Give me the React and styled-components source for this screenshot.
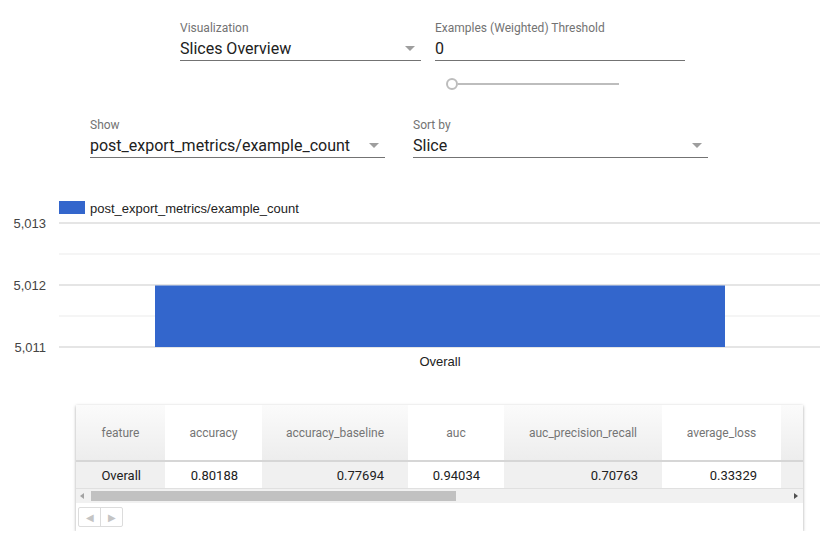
import React from "react";
import styled, { createGlobalStyle } from "styled-components";

const Global = createGlobalStyle`
  html, body { margin: 0; padding: 0; background: #fff; }
  body { font-family: Roboto, "Noto Sans", Arial, sans-serif; color: #212121; }
`;

const Page = styled.div`
  width: 831px;
  display: flex;
  flex-direction: column;
`;

const ControlRow = styled.div`
  display: flex;
  gap: ${(p) => p.$gap}px;
  padding-left: ${(p) => p.$left}px;
  padding-top: ${(p) => p.$top}px;
`;

const Field = styled.div`
  width: ${(p) => p.$width}px;
  display: flex;
  flex-direction: column;
`;

const Label = styled.div`
  font-size: 12px;
  line-height: 16px;
  color: #737373;
`;

const ValueLine = styled.div`
  display: flex;
  align-items: center;
  justify-content: space-between;
  height: 25px;
  padding-top: 1px;
  box-sizing: border-box;
  font-size: 16px;
  color: #212121;
  border-bottom: 1px solid #737373;
`;

const Caret = styled.span`
  width: 0;
  height: 0;
  border-left: 5px solid transparent;
  border-right: 5px solid transparent;
  border-top: 5px solid #9e9e9e;
  margin-right: 6px;
`;

const SliderWrap = styled.div`
  margin-top: 11px;
  margin-left: 11px;
  width: 173px;
  height: 24px;
  display: flex;
  align-items: center;
`;

const Knob = styled.span`
  width: 8px;
  height: 8px;
  border: 2px solid #bdbdbd;
  border-radius: 50%;
  box-sizing: content-box;
`;

const Track = styled.span`
  flex: 1;
  height: 2px;
  background: #bdbdbd;
`;

const ChartBox = styled.div`
  margin-top: 32px;
  height: 185px;
  svg { display: block; }
`;

const Card = styled.div`
  margin: 30px 0 0 76px;
  width: 727px;
  background: #fff;
  box-shadow: 0 1px 3px rgba(0, 0, 0, 0.35);
  font-size: 12px;
  overflow: hidden;
`;

const Table = styled.div`
  display: grid;
  grid-template-columns: 89px 97px 146px 96px 158px 119px 22px;
`;

const HeadCell = styled.div`
  height: 55px;
  display: flex;
  align-items: center;
  justify-content: center;
  color: #757575;
  font-size: 12px;
  border-bottom: 2px solid #d6d6d6;
  background: ${(p) =>
    p.$shade ? "linear-gradient(#fbfbfb, #ededed)" : "#fff"};
  white-space: nowrap;
`;

const BodyCell = styled.div`
  height: 27px;
  display: flex;
  align-items: center;
  justify-content: flex-end;
  padding-right: 24px;
  box-sizing: border-box;
  color: #212121;
  font-size: 13px;
  border-bottom: 1px solid #e0e0e0;
  background: ${(p) => (p.$shade ? "#f0f0f0" : "#fff")};
`;

const ScrollBar = styled.div`
  height: 14px;
  background: #f1f1f1;
  display: flex;
  align-items: center;
  position: relative;
`;

const ScrollThumb = styled.div`
  position: absolute;
  left: 15px;
  top: 2px;
  width: 365px;
  height: 10px;
  background: #c1c1c1;
`;

const Arrow = styled.span`
  position: absolute;
  top: 4px;
  ${(p) => (p.$dir === "left" ? "left: 4px;" : "right: 5px;")}
  width: 0;
  height: 0;
  border-top: 3px solid transparent;
  border-bottom: 3px solid transparent;
  ${(p) =>
    p.$dir === "left"
      ? "border-right: 4px solid #a3a3a3;"
      : "border-left: 4px solid #505050;"}
`;

const Footer = styled.div`
  height: 28px;
  display: flex;
  align-items: center;
  padding-left: 2px;
`;

const Pager = styled.div`
  display: flex;
  border: 1px solid #dcdcdc;
  border-radius: 2px;
  height: 18px;
`;

const PageBtn = styled.span`
  width: 21px;
  display: flex;
  align-items: center;
  justify-content: center;
  font-size: 10px;
  color: #c4c4c4;
  & + & { border-left: 1px solid #dcdcdc; }
`;

const columns = [
  "feature",
  "accuracy",
  "accuracy_baseline",
  "auc",
  "auc_precision_recall",
  "average_loss",
  "",
];
const row = ["Overall", "0.80188", "0.77694", "0.94034", "0.70763", "0.33329", ""];

function Chart() {
  const left = 59;
  const right = 820;
  const lines = [
    { y: 33, major: true, label: "5,013" },
    { y: 64, major: false },
    { y: 95, major: true, label: "5,012" },
    { y: 126, major: false },
    { y: 157, major: true, label: "5,011" },
  ];
  return (
    <svg width="831" height="185" fontFamily="'Liberation Sans', Arial, sans-serif">
      <rect x={left} y={11} width={26} height={13} fill="#3366cc" />
      <text x={90} y={22.5} fontSize="13" fill="#222">
        post_export_metrics/example_count
      </text>
      {lines.map((l) => (
        <g key={l.y}>
          <rect x={left} y={l.y - 0.5} width={right - left} height={1} fill={l.major ? "#cccccc" : "#ebebeb"} />
          {l.label && (
            <text x={46} y={l.y + 4.5} fontSize="13" fill="#444" textAnchor="end">
              {l.label}
            </text>
          )}
        </g>
      ))}
      <rect x={155} y={95.5} width={570} height={61.5} fill="#3366cc" />
      <text x={440} y={175.5} fontSize="13" fill="#222" textAnchor="middle">
        Overall
      </text>
    </svg>
  );
}

export default function App() {
  return (
    <Page>
      <Global />
      <ControlRow $left={180} $gap={14} $top={20}>
        <Field $width={241}>
          <Label>Visualization</Label>
          <ValueLine>
            Slices Overview
            <Caret />
          </ValueLine>
        </Field>
        <Field $width={250}>
          <Label>Examples (Weighted) Threshold</Label>
          <ValueLine>0</ValueLine>
          <SliderWrap>
            <Knob />
            <Track />
          </SliderWrap>
        </Field>
      </ControlRow>
      <ControlRow $left={90} $gap={28} $top={21}>
        <Field $width={295}>
          <Label>Show</Label>
          <ValueLine>
            post_export_metrics/example_count
            <Caret />
          </ValueLine>
        </Field>
        <Field $width={295}>
          <Label>Sort by</Label>
          <ValueLine>
            Slice
            <Caret />
          </ValueLine>
        </Field>
      </ControlRow>
      <ChartBox>
        <Chart />
      </ChartBox>
      <Card>
        <Table>
          {columns.map((c, i) => (
            <HeadCell key={"h" + i} $shade={i % 2 === 0}>
              {c}
            </HeadCell>
          ))}
          {row.map((c, i) => (
            <BodyCell key={"b" + i} $shade={i % 2 === 0}>
              {c}
            </BodyCell>
          ))}
        </Table>
        <ScrollBar>
          <Arrow $dir="left" />
          <ScrollThumb />
          <Arrow $dir="right" />
        </ScrollBar>
        <Footer>
          <Pager>
            <PageBtn>◀</PageBtn>
            <PageBtn>▶</PageBtn>
          </Pager>
        </Footer>
      </Card>
    </Page>
  );
}
